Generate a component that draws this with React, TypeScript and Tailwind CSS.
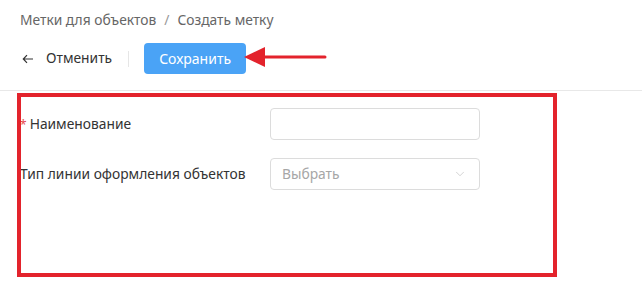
import { ChevronDown } from 'lucide-react';

const font = { fontFamily: '"Noto Sans", "Open Sans", Arial, sans-serif' };

function BackArrow() {
  return (
    <svg width="12" height="10" viewBox="0 0 12 10" fill="none" stroke="#333" strokeWidth="1.2">
      <path d="M11 5H1.5M5 1.2L1.3 5L5 8.8" />
    </svg>
  );
}

export default function App() {
  return (
    <div className="relative w-[642px] h-[298px] bg-white text-[#333] overflow-hidden" style={font}>
      {/* breadcrumb */}
      <div className="px-[20px] pt-[10px] h-[31px] flex items-center gap-[6px] text-[13.8px] text-[#666]">
        <span>Метки для объектов</span>
        <span className="text-[#999] px-[2px]">/</span>
        <span>Создать метку</span>
      </div>

      {/* toolbar */}
      <div className="border-b border-[#e8e8e8] pt-[12px] pb-[16px]">
        <div className="flex items-center h-[31px] pl-[20px]">
          <button className="flex items-center gap-[12px] text-[13.8px] text-[#333] pl-[2px]">
            <BackArrow />
            <span>Отменить</span>
          </button>
          <div className="w-px h-[16px] bg-[#e6e6e6] ml-[16px] mr-[15px]" />
          <button className="w-[102px] h-[31px] rounded-[4px] bg-[#4aa3f6] text-white text-[14px]">
            Сохранить
          </button>
        </div>
      </div>

      {/* form */}
      <div className="pl-[20px] pt-[17px] flex flex-col gap-[18px] text-[13.8px]">
        <div className="flex items-center h-[32px]">
          <div className="w-[250px] flex items-center pt-[1px]">
            <span className="text-[#e5484d] text-[12px] mr-[3px]">*</span>
            <span>Наименование</span>
          </div>
          <div className="w-[210px] h-[32px] border border-[#dcdcdc] rounded-[4px]" />
        </div>
        <div className="flex items-center h-[32px]">
          <div className="w-[250px] pt-[1px]">Тип линии оформления объектов</div>
          <div className="w-[210px] h-[32px] border border-[#dcdcdc] rounded-[4px] flex items-center justify-between pl-[11px] pr-[12px]">
            <span className="text-[#a6a6a6] pt-[1px]">Выбрать</span>
            <ChevronDown size={14} strokeWidth={1.2} color="#c2c2c2" />
          </div>
        </div>
      </div>

      {/* annotations */}
      <div className="absolute left-[17px] top-[93px] w-[540px] h-[184px] border-[4px] border-[#e3232c] pointer-events-none" />
      <svg className="absolute left-[240px] top-[44px]" width="90" height="26" viewBox="0 0 90 26">
        <path d="M22 13H85" stroke="#e3232c" strokeWidth="3" strokeLinecap="round" />
        <path d="M4 13L25 3V23Z" fill="#e3232c" />
      </svg>
    </div>
  );
}
